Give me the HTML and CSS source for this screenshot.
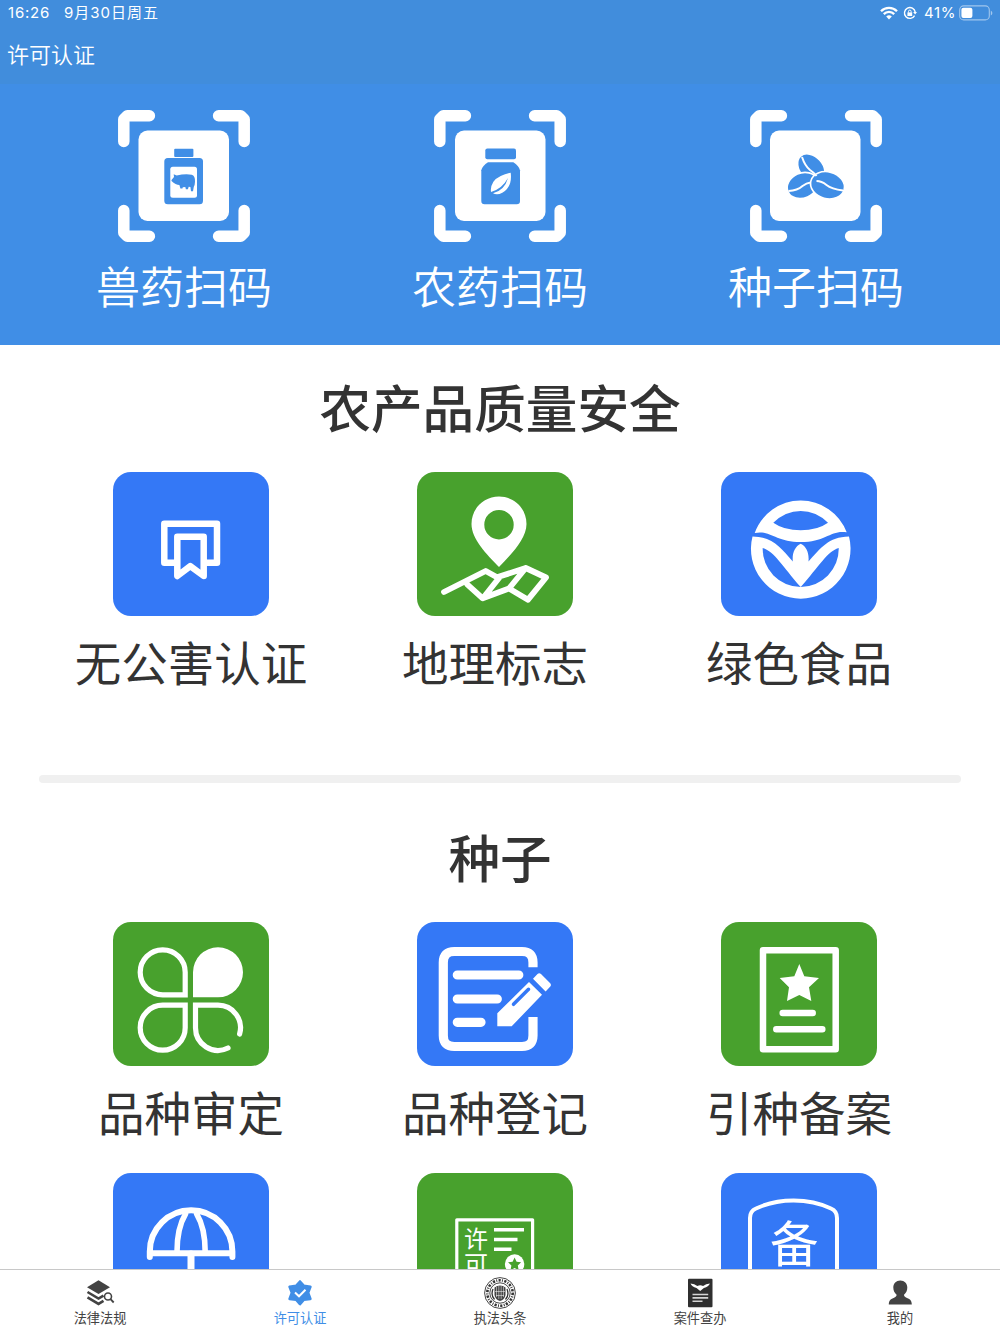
FILE: index.html
```html
<!DOCTYPE html>
<html lang="zh-CN">
<head>
    <meta charset="UTF-8">
    <meta name="viewport" content="width=device-width, initial-scale=1.0">
    <title>许可认证</title>
    <link rel="stylesheet" href="styles.css">
</head>
<body>
    <header class="header">
        <div class="status-bar">
            <span class="time">16:26</span>
            <span class="date">9月30日周五</span>
            <div class="status-right">
                <svg class="wifi" width="18" height="14" viewBox="0 0 18 14" fill="none" stroke="#fff" stroke-width="2.3">
                    <path d="M1 5.2a11.3 11.3 0 0 1 16 0M3.8 8.1a7.3 7.3 0 0 1 10.4 0"/>
                    <path d="M9 13.4 6.2 10.5a4 4 0 0 1 5.6 0z" fill="#fff" stroke="none"/>
                </svg>
                <svg class="lock" width="14" height="14" viewBox="0 0 14 14" fill="none" stroke="#fff" stroke-width="1.4">
                    <path d="M11.6 9.6a5.4 5.4 0 1 1 .6-3.4"/>
                    <path d="M10.2 6h3.8l-1.9 2.6z" fill="#fff" stroke="none"/>
                    <path d="M4.4 6.4h4.8v3.6H4.4z" fill="#fff" stroke="none"/>
                    <path d="M5.5 6.6V5.4a1.3 1.3 0 0 1 2.6 0v1.2" stroke-width="1"/>
                </svg>
                <span class="percent">41%</span>
                <svg width="34" height="16" viewBox="0 0 34 16">
                    <rect x="0.7" y="0.9" width="29.6" height="14" rx="4" fill="none" stroke="#a0c6ed" stroke-width="1.1"/>
                    <rect x="2.4" y="2.7" width="11" height="10.4" rx="2" fill="#fff"/>
                    <path d="M31.8 5.4q1.6 1 1.6 2.5t-1.6 2.5z" fill="#a0c6ed"/>
                </svg>
            </div>
        </div>
        <div class="nav-title">许可认证</div>
    </header>

    <main class="content">
        <div class="scan-bar">
            <div class="scan-item">
                <svg class="scan-icon" viewBox="0 0 132 132">
                    <path class="frame" d="M5.8 31.4V9.3l3.5-3.5h22.1M100.6 5.8h22.1l3.5 3.5v22.1M126.2 100.6v22.1l-3.5 3.5h-22.1M31.4 126.2H9.3l-3.5-3.5v-22.1"/>
                    <rect x="20.5" y="20.5" width="90.5" height="90.5" rx="9" fill="#fff"/>
                    <rect class="blue" x="56.2" y="38.7" width="19.2" height="8.3" rx="1"/>
                    <rect class="blue" x="46.3" y="48" width="38.7" height="46.3" rx="3.5"/>
                    <rect x="52.3" y="56.7" width="26.7" height="31" rx="2.5" fill="#fff"/>
                    <path class="blue" d="M53.5 70l2.5-3-.3-2.8 3 1.3q8-1.8 15-.8 3.6 1 3.3 7-.2 4-1.2 5l-.8 4.5h-2l-.6-4.2-1.7-.2-.8 2.4h-2l-.6-2.2-2.5.2-.4 1.3h-2l-1-3.5q-3.7 0-7.9-4z"/>
                </svg>
                <span class="scan-label">兽药扫码</span>
            </div>
            <div class="scan-item">
                <svg class="scan-icon" viewBox="0 0 132 132">
                    <path class="frame" d="M5.8 31.4V9.3l3.5-3.5h22.1M100.6 5.8h22.1l3.5 3.5v22.1M126.2 100.6v22.1l-3.5 3.5h-22.1M31.4 126.2H9.3l-3.5-3.5v-22.1"/>
                    <rect x="21" y="20.5" width="90.5" height="90.5" rx="9" fill="#fff"/>
                    <rect class="blue" x="51.3" y="38.5" width="30.7" height="10.8" rx="2"/>
                    <path class="blue" d="M54 52.2h25.3q5.5 3.3 6.7 8V91q0 3.3-3.3 3.3H50.6q-3.3 0-3.3-3.3V60.2q1.2-4.7 6.7-8z"/>
                    <path d="M76.7 62.7q-13 3-17.3 9-3.2 5-2.4 10.2Q68 79 74 68q-3.5 12.5-15 15.2 4 2.4 9.3-.4Q78.5 77 76.7 62.7z" fill="#fff"/>
                </svg>
                <span class="scan-label">农药扫码</span>
            </div>
            <div class="scan-item">
                <svg class="scan-icon" viewBox="0 0 132 132">
                    <path class="frame" d="M5.8 31.4V9.3l3.5-3.5h22.1M100.6 5.8h22.1l3.5 3.5v22.1M126.2 100.6v22.1l-3.5 3.5h-22.1M31.4 126.2H9.3l-3.5-3.5v-22.1"/>
                    <rect x="20" y="20.5" width="90.5" height="90.5" rx="9" fill="#fff"/>
                    <g class="blue" stroke="#fff" stroke-width="1.6">
                        <ellipse cx="61.3" cy="58" rx="16" ry="11.5" transform="rotate(48 61.3 58)"/>
                        <ellipse cx="52.5" cy="75.5" rx="15.8" ry="12.5" transform="rotate(-24 52.5 75.5)"/>
                        <ellipse cx="77.5" cy="75.3" rx="17.2" ry="13.4" transform="rotate(15 77.5 75.3)"/>
                    </g>
                    <path d="M52 47q3 9 8 13 4.5 3 6.5 6M38.500 81q9-.5 14-5 4-3 8-3.500M66.500 71q5 0 10 4t16.500 5.500" fill="none" stroke="#fff" stroke-width="2"/>
                </svg>
                <span class="scan-label">种子扫码</span>
            </div>
        </div>

        <section class="section">
            <h2 class="section-title">农产品质量安全</h2>
            <div class="grid">
                <div class="item">
                    <svg class="tile tile-blue" viewBox="0 0 156 144">
                        <path class="line" stroke-width="6.5" d="M64.3 90.7h-13v-39H104v39H90.7M64.3 104V64.7h26.4V104l-13.4-9.8z"/>
                    </svg>
                    <span class="label">无公害认证</span>
                </div>
                <div class="item">
                    <svg class="tile tile-green" viewBox="0 0 156 144">
                        <path fill="#fff" fill-rule="evenodd" d="M82 24.5c15.5 0 27.5 12.2 27.5 27.5 0 15-15 30-27.5 43-12.5-13-27.5-28-27.5-43 0-15.3 12-27.5 27.5-27.5zM82 38a14.7 14.7 0 1 0 0 29.4A14.7 14.7 0 0 0 82 38z"/>
                        <path class="line" stroke-width="5.8" d="M27 120l41.7-21L80 105.3 108.7 96l20.3 9.5-18 22.2L92 116.5l-26.3 9.8-15.5-14M82 106L66.5 125.5M108.7 96L92 116.5"/>
                    </svg>
                    <span class="label">地理标志</span>
                </div>
                <div class="item">
                    <svg class="tile tile-blue" viewBox="0 0 156 144">
                        <g fill="#fff" fill-rule="evenodd">
                            <path d="M33.7 61A49 49 0 0 1 125.7 60.3C110 57.5 105 70 79.7 70S49 57.5 33.7 61zM52.3 50.7Q63 58.3 79.7 58.3T107 50.7Q95 39 79.7 39T52.3 50.7z"/>
                            <path d="M31.5 64.5A49.8 49.8 0 1 0 128 64.5C107 65 100 76 87.5 89.5 88.3 81 85.5 74.5 79.7 71.8 74 74.5 71 81 71.8 89.5 59.5 76 52.5 65 31.5 64.5zM41.7 76C54 80 61 94 79.7 115A38 38 0 0 1 41.7 76zM117.7 76C105.5 80 98.5 94 79.7 115A38 38 0 0 0 117.7 76z"/>
                        </g>
                    </svg>
                    <span class="label">绿色食品</span>
                </div>
            </div>
        </section>

        <div class="divider"></div>

        <section class="section">
            <h2 class="section-title">种子</h2>
            <div class="grid">
                <div class="item">
                    <svg class="tile tile-green" viewBox="0 0 156 144">
                        <path class="line miter" stroke-width="5.2" d="M72.2 72.8H49.7a22.5 22.5 0 1 1 22.5-22.5zM72.2 83.2v22.5a22.5 22.5 0 1 1-22.5-22.5z"/>
                        <path class="line miter" stroke-width="5.2" d="M126.6 112a22.5 22.5 0 0 0-21.6-28.8H82.5v22.5A22.5 22.5 0 0 0 115 126"/>
                        <path d="M80 75.3v-25a25 25 0 1 1 25 25z" fill="#fff"/>
                    </svg>
                    <span class="label">品种审定</span>
                </div>
                <div class="item">
                    <svg class="tile tile-blue" viewBox="0 0 156 144">
                        <path class="line butt" stroke-width="9.2" d="M116 45.3V40.5q0-11-11-11H37.3q-11 0-11 11v73q0 11 11 11H105q11 0 11-11V95"/>
                        <path class="line" stroke-width="9.2" d="M40.3 53h61.5M40.3 77h40M40.3 100.3H64"/>
                        <path d="M80.3 91.3l31.7-31.3 13 12.7-30.3 31.6H80.3zM116 56.7l4.5-4.7q1.7-1.7 3.5 0l9 9q1.7 1.7.3 3.5l-4.7 5z" fill="#fff"/>
                        <path d="M111.5 67.3L96.5 82.3" stroke="#3478f6" stroke-width="3.5" stroke-linecap="round"/>
                    </svg>
                    <span class="label">品种登记</span>
                </div>
                <div class="item">
                    <svg class="tile tile-green" viewBox="0 0 156 144">
                        <rect class="line" stroke-width="6.5" x="42" y="28.3" width="72.7" height="99"/>
                        <path d="M78.3 42l5 12.3L98 56l-10 9.3L90.3 79l-12-6L66 79l2-13.7L58.7 56l14.6-1.7z" fill="#fff"/>
                        <path class="line" stroke-width="6.5" d="M61.7 91h30M55.3 107.3h46"/>
                    </svg>
                    <span class="label">引种备案</span>
                </div>
                <div class="item">
                    <svg class="tile tile-blue" viewBox="0 0 156 144">
                        <path class="line" stroke-width="6" d="M36.8 84v-5.5a41.3 41.3 0 0 1 82.6 0V84M38 80.2h80"/>
                        <path class="line" stroke-width="5.6" d="M72.5 41Q64 55 64 79M83.7 41q8.5 14 8.5 38"/>
                        <path class="line" stroke-width="7" d="M78 81v45q0 8-8 8"/>
                    </svg>
                </div>
                <div class="item">
                    <svg class="tile tile-green" viewBox="0 0 156 144">
                        <rect class="line" stroke-width="3.2" x="39.8" y="46.8" width="75.8" height="70"/>
                        <text class="icon-text" x="47" y="74.8" font-size="24">许</text>
                        <text class="icon-text" x="47" y="99.5" font-size="24">可</text>
                        <path class="line butt" stroke-width="3.5" d="M77 56.7h30M77 66.4h23.5M77 76.3h17.5"/>
                        <circle cx="97.6" cy="91" r="9.7" fill="#fff"/>
                        <path d="M97.6 84.5l2 4.3 4.5.5-3.3 3.2.9 4.8-4.1-2.4-4.1 2.4.9-4.8-3.3-3.2 4.5-.5z" fill="#48a12d"/>
                    </svg>
                </div>
                <div class="item">
                    <svg class="tile tile-blue" viewBox="0 0 156 144">
                        <path class="line" stroke-width="4" d="M29 130V45q0-7 6-9.5Q52 27.5 72.6 27.5T110 35.5q6 2.5 6 9.500v85z"/>
                        <text class="icon-text" x="49" y="88.5" font-size="48.5">备</text>
                    </svg>
                </div>
            </div>
        </section>
    </main>

    <nav class="tab-bar">
        <div class="tab">
            <svg class="tab-icon" viewBox="0 0 32 32">
                <path d="M14.5 3.3L26 10.2l-11.5 6.9L3 10.2z" fill="#434343"/>
                <path d="M3.5 15l11 6.6 5-3M3.5 20.3l11 6.6 5-3" fill="none" stroke="#434343" stroke-width="2.6"/>
                <circle cx="24" cy="19.5" r="3.5" fill="none" stroke="#434343" stroke-width="1.6"/>
                <path d="M26.5 22.2l3.2 3.3" stroke="#434343" stroke-width="1.8"/>
            </svg>
            <span>法律法规</span>
        </div>
        <div class="tab active">
            <svg class="tab-icon" viewBox="0 0 32 32">
                <path d="M16 4.5L19.9 8.9 26.4 9.7 24.1 15.8 26.4 21.9 19.9 22.7 16 27.1 12.1 22.7 5.6 21.9 7.9 15.8 5.6 9.7 12.1 8.9z" fill="#408ee6" stroke="#408ee6" stroke-width="2.6" stroke-linejoin="round"/>
                <path d="M11 15.5l4 3.8 6.5-6.6" fill="none" stroke="#fff" stroke-width="2"/>
            </svg>
            <span>许可认证</span>
        </div>
        <div class="tab">
            <!-- round seal emblem -->
            <svg class="tab-icon" viewBox="0 0 32 32" fill="none" stroke="#333">
                <circle cx="16" cy="16" r="15.4" stroke-width="0.9"/>
                <circle cx="16" cy="16" r="12.7" stroke-width="2.6" stroke-dasharray="2.2 1.3 0.9 1.4"/>
                <circle cx="16" cy="16" r="10.2" stroke-width="0.9"/>
                <path d="M10.5 10.5q5.5-4 11 0v7.5q-1 5-5.5 6-4.5-1-5.5-6z" fill="#444" stroke="none"/>
                <path d="M12.5 10v10M14.8 9v13M17.2 9v13M19.5 10v10M11 14.5h10M12 18.5h8" stroke="#fff" stroke-width="0.5"/>
                <path d="M9 12q-2.5 6 1.5 10.5M23 12q2.5 6-1.5 10.5" stroke-width="1.3"/>
            </svg>
            <span>执法头条</span>
        </div>
        <div class="tab">
            <svg class="tab-icon" viewBox="0 0 32 32">
                <rect x="4" y="1.8" width="24.5" height="28.4" rx="1" fill="#2f2f2f"/>
                <path d="M6.5 6.5q4 0 6.8 2.600 2.900-1.600 5.800 0 2.800-2.600 6.800-2.600-1.300 3.200-6 4.600l-3.700 3-3.700-3q-4.700-1.400-6-4.600z" fill="#fff"/>
                <path d="M8.5 17.5h15.7M8.5 20.9h15.7M8.5 24.2h10" stroke="#d5d5d5" stroke-width="1.6"/>
            </svg>
            <span>案件查办</span>
        </div>
        <div class="tab">
            <svg class="tab-icon" viewBox="0 0 32 32">
                <path d="M16.3 3.6c4.2 0 7 3 7 7 0 3-1.3 5.7-3.3 7.2 0 1.6.8 2.3 3 3.1 3.3 1.2 4.6 2.4 4.8 6.5H4.8c.2-4.1 1.5-5.3 4.8-6.5 2.2-.8 3-1.5 3-3.1-2-1.5-3.3-4.2-3.3-7.2 0-4 2.8-7 7-7z" fill="#434343"/>
            </svg>
            <span>我的</span>
        </div>
    </nav>
</body>
</html>
```
FILE: styles.css
```css
* {
    box-sizing: border-box;
}
body {
    margin: 0;
    height: 1334px;
    display: flex;
    flex-direction: column;
    overflow: hidden;
    background-color: #fff;
    color: #333;
    font-family: "Noto Sans CJK SC", sans-serif;
}

/* header */
.header {
    flex: none;
    height: 84px;
    background-color: #418ddc;
    color: #fff;
}
.status-bar {
    display: flex;
    align-items: center;
    height: 26px;
    padding: 0 7px 0 8px;
    font-family: Inter, "Noto Sans CJK SC", sans-serif;
    font-size: 15px;
    font-weight: 400;
    line-height: 26px;
}
.time {
    width: 56px;
    letter-spacing: 0.8px;
}
.date {
    letter-spacing: 1px;
}
.status-right {
    display: flex;
    align-items: center;
    margin-left: auto;
}
.lock {
    margin-left: 5px;
}
.percent {
    margin: 0 3px 0 7px;
    letter-spacing: 0.6px;
}
.nav-title {
    padding-left: 7px;
    font-size: 22px;
    font-weight: 350;
    line-height: 54px;
}

.content {
    flex: 1;
    min-height: 0;
    overflow: hidden;
}

/* scan buttons */
.scan-bar {
    display: flex;
    height: 261px;
    padding: 26px 26px 0;
    background-color: #408ee6;
}
.scan-item {
    flex: 1;
    display: flex;
    flex-direction: column;
    align-items: center;
}
.scan-icon {
    width: 132px;
    height: 132px;
}
.frame {
    fill: none;
    stroke: #fff;
    stroke-width: 11.5;
    stroke-linecap: round;
    stroke-linejoin: round;
}
.blue {
    fill: #408ee6;
}
.scan-label {
    margin-top: 13px;
    color: #fff;
    font-size: 44px;
    font-weight: 350;
    line-height: 60px;
}

/* sections */
.section {
    padding: 31px 49px 0 39px;
}
.section-title {
    margin: 0 -10px 36px 0;
    font-size: 51.6px;
    font-weight: 500;
    line-height: 60px;
    text-align: center;
}
.grid {
    display: grid;
    grid-template-columns: repeat(3, 1fr);
    row-gap: 32px;
}
.item {
    display: flex;
    flex-direction: column;
    align-items: center;
}
.tile {
    width: 156px;
    height: 144px;
    border-radius: 18px;
}
.tile-blue {
    background-color: #3478f6;
}
.tile-green {
    background-color: #48a12d;
}
.line {
    fill: none;
    stroke: #fff;
    stroke-linecap: round;
    stroke-linejoin: round;
}
.miter {
    stroke-linejoin: miter;
}
.butt {
    stroke-linecap: butt;
}
.icon-text {
    fill: #fff;
    font-weight: 400;
}
.label {
    margin-top: 15px;
    font-size: 46.5px;
    font-weight: 400;
    line-height: 60px;
    white-space: nowrap;
}
.divider {
    height: 7.5px;
    margin: 84px 39px 12.5px;
    border-radius: 4px;
    background-color: #f0f0f0;
}

/* bottom tabs */
.tab-bar {
    flex: none;
    display: flex;
    height: 65px;
    border-top: 1px solid #c8c8c8;
    background-color: #fff;
}
.tab {
    flex: 1;
    display: flex;
    flex-direction: column;
    align-items: center;
    padding-top: 7px;
    color: #434343;
    font-size: 13.2px;
    line-height: 18px;
}
.tab-icon {
    width: 32px;
    height: 32px;
}
.active {
    color: #408ee6;
}
```
